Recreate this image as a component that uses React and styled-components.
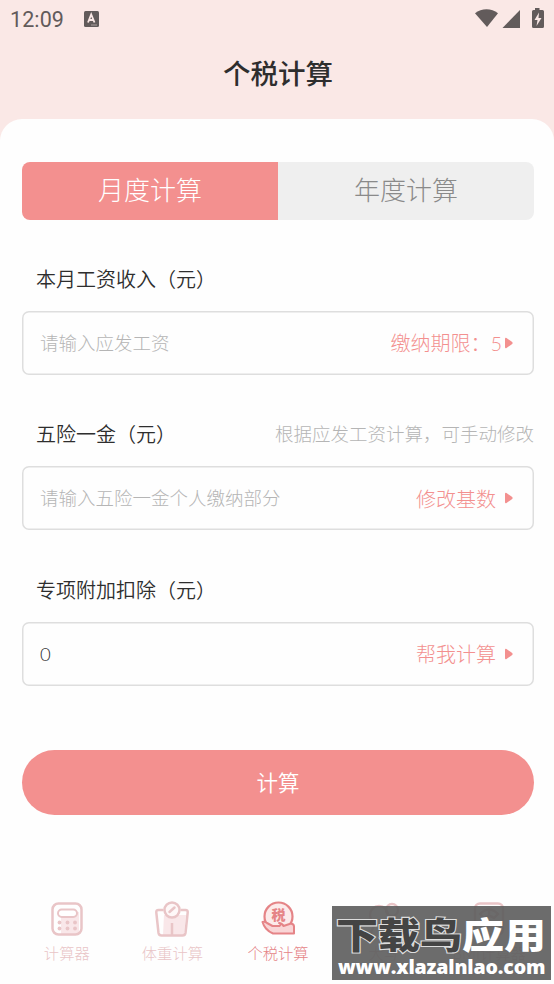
import React, { useState } from 'react'
import styled, { createGlobalStyle } from 'styled-components'

const Colors = {
    primary: '#f3908f',
    header: '#fae8e6',
    status: '#625b5b',
    text: '#2e2e2e',
    hint: '#b5b5b5',
    line: '#dedede',
    inactive: '#e9c5c7',
    active: '#e58487',
}

const GlobalStyle = createGlobalStyle`
    * {
        box-sizing: border-box;
    }

    body {
        margin: 0;
        background-color: ${Colors.header};
        font-family: Lato, 'Noto Sans CJK SC', sans-serif;
        font-weight: 300;
    }

    button,
    input {
        font: inherit;
        margin: 0;
        border: 0;
        padding: 0;
        background: none;
    }
`

const Screen = styled.div`
    position: relative;
    display: flex;
    flex-direction: column;
    height: 984px;
    width: 554px;
    overflow: hidden;
    white-space: nowrap;
`

const StatusBar = styled.div`
    display: flex;
    align-items: center;
    height: 38px;
    padding: 0 9px 0 10px;
    color: ${Colors.status};
`

const Clock = styled.span`
    width: 74px;
    font-family: Roboto, sans-serif;
    font-size: 21.5px;
    font-weight: 400;
    letter-spacing: 0.1px;
`

const StatusIcons = styled.svg`
    margin-left: auto;
`

const Title = styled.h1`
    height: 80.5px;
    margin: 0;
    color: ${Colors.text};
    font-size: 27.5px;
    font-weight: 500;
    line-height: 71px;
    text-align: center;
    padding-left: 2px;
`

const Sheet = styled.main`
    flex: 1;
    display: flex;
    flex-direction: column;
    padding: 43px 20px 0 22px;
    border-radius: 22px 22px 0 0;
    background-color: #fefefe;
`

const Tabs = styled.div`
    display: flex;
    height: 58.5px;
    margin-bottom: 42px;
    border-radius: 8px;
    overflow: hidden;
`

const Tab = styled.button`
    flex: 1;
    padding-bottom: 1px;
    color: ${props => (props.$active ? '#fff' : '#8a8a8a')};
    background-color: ${props => (props.$active ? Colors.primary : '#efefef')};
    font-size: 26px;
    line-height: 54px;
`

const Field = styled.section`
    height: 155.5px;
`

const FieldHead = styled.div`
    display: flex;
    align-items: center;
    justify-content: space-between;
    height: 32px;
    margin-bottom: 16.5px;
    padding-left: 14px;
`

const Label = styled.label`
    color: ${Colors.text};
    font-size: 20px;
    font-weight: 350;
`

const Hint = styled.span`
    padding-bottom: 2px;
    color: ${Colors.hint};
    font-size: 18.5px;
`

const InputBox = styled.div`
    display: flex;
    align-items: center;
    height: 64px;
    padding: 0 21px 0 18px;
    box-shadow: inset 0 0 0 1.5px ${Colors.line};
    border-radius: 7px;
`

const Input = styled.input`
    flex: 1;
    min-width: 0;
    color: ${Colors.text};
    font-size: 18.5px;
    outline: none;

    &::placeholder {
        color: ${Colors.hint};
        opacity: 1;
    }
`

const Action = styled.button`
    display: flex;
    align-items: center;
    gap: ${props => props.$gap}px;
    color: ${Colors.primary};
    font-size: 20px;
`

const Submit = styled.button`
    height: 65px;
    margin-top: 21px;
    padding-bottom: 2px;
    border-radius: 33px;
    color: #fff;
    background-color: ${Colors.primary};
    font-size: 21.5px;
    font-weight: 350;
`

const BottomNav = styled.nav`
    display: grid;
    grid-template-columns: repeat(5, 105.6px);
    margin: 85px -20px 0 -8px;
`

const NavItem = styled.div`
    display: flex;
    flex-direction: column;
    align-items: center;
    color: ${props => (props.$active ? Colors.active : Colors.inactive)};
    font-size: 15.3px;
    line-height: 24px;

    svg {
        display: block;
        margin-bottom: 3px;
    }
`

const Watermark = styled.div`
    position: absolute;
    left: 332px;
    top: 906px;
    width: 219px;
    height: 74px;
    background-color: rgba(92, 92, 92, 0.9);
`

const WatermarkName = styled.div`
    padding-left: 4px;
    color: #fff;
    font-size: 42px;
    font-weight: 900;
    line-height: 60px;
    height: 50px;
    transform: scaleY(0.86);
`

const Outlined = styled.span`
    color: #444;
    -webkit-text-stroke: 2.5px #ddd;
    paint-order: stroke fill;
`

const WatermarkSite = styled.div`
    padding-left: 6px;
    color: #fff;
    font-family: 'Open Sans', sans-serif;
    font-size: 19.5px;
    font-weight: 800;
    line-height: 22px;
    height: 24px;
    letter-spacing: -0.15px;
`

const KeyboardIcon = () => (
    <svg width="15" height="16" viewBox="0 0 15 16">
        <rect width="15" height="16" rx="1.5" fill="currentColor" />
        <path d="M4 11.5 7.2 3.5 10.5 11.5M5.2 9h4" fill="none" stroke={Colors.header} strokeWidth="1.8" />
        <path d="M7.5 14h1M9.5 14h1M11.5 14h1" stroke={Colors.header} />
    </svg>
)

const SystemIcons = () => (
    <StatusIcons width="70" height="22" viewBox="0 0 70 22" fill="currentColor">
        <path d="M0 5.2C6.5-.2 16.5-.2 23 5.2L12 19Z" />
        <path d="M45 2V20H27.5Z" />
        <path d="M60 2V0h4.5v2h3q1.5 0 1.5 1.5v15q0 1.5-1.5 1.5h-9q-1.5 0-1.5-1.5v-15Q57 2 58.5 2Z" />
        <path d="M64 4.5 59.5 12H62.5L61.5 18 66.5 10H63.5Z" fill={Colors.header} />
    </StatusIcons>
)

const Arrow = () => (
    <svg width="8" height="12" viewBox="0 0 8 12" fill="currentColor">
        <path d="M0 2Q0 .2 1.5.9L7.2 5.1Q8 6 7.2 6.9L1.5 11.1Q0 11.8 0 10Z" />
    </svg>
)

const CalculatorIcon = () => (
    <svg width="36" height="38" viewBox="0 0 36 38" fill="none" stroke="currentColor" strokeWidth="2.5">
        <path d="M12 17q0-5 5-5h13v22H12Z" fill="#f9e7e9" stroke="none" />
        <rect x="3.5" y="3.5" width="29" height="31" rx="6" />
        <rect x="9" y="9.5" width="19" height="7.5" rx="3.7" strokeWidth="2" fill="#fff" />
        <g fill="currentColor" stroke="none">
            <circle cx="10.5" cy="22.5" r="1.9" />
            <circle cx="18.5" cy="22.5" r="1.9" />
            <circle cx="26" cy="22.5" r="1.9" />
            <circle cx="10.5" cy="28.5" r="1.9" />
            <circle cx="18.5" cy="28.5" r="1.9" />
            <circle cx="26" cy="28.5" r="1.9" />
        </g>
    </svg>
)

const ScaleIcon = () => (
    <svg width="36" height="38" viewBox="0 0 36 38" fill="none" stroke="currentColor" strokeWidth="2.5">
        <path d="M10 15h22l-2 20H9Z" fill="#f9e7e9" stroke="none" />
        <path d="M9.5 10H4.5Q2 10 2.3 12.5L4.5 33Q5 35.5 7.5 35.5H28.5Q31 35.5 31.5 33L33.7 12.5Q34 10 31.5 10H26.5" />
        <circle cx="18" cy="10" r="7.5" fill="#fef8f8" />
        <path d="m15.5 12 5-4.5" strokeLinecap="round" />
        <path d="M18 23v12" />
    </svg>
)

const TaxIcon = () => (
    <svg width="36" height="38" viewBox="0 0 36 38" fill="none" stroke="currentColor">
        <circle cx="18.5" cy="16.5" r="14" fill="#fceaea" strokeWidth="2.2" />
        <path
            d="M2.5 22Q4.500 21 7 23L12.5 26H19.5Q22 24 19 23Q22 23 23.5 26L31 23.5Q34 24 34 26.5V33.5H13Q9 32 6 28.5Q3.5 25.5 2.5 22Z"
            fill="#f9d5d6"
            strokeWidth="2"
            strokeLinejoin="round"
        />
        <text x="18.5" y="20" textAnchor="middle" fontSize="14" fontWeight="900" fill="currentColor" stroke="none">
            税
        </text>
    </svg>
)

const PairIcon = () => (
    <svg width="36" height="38" viewBox="0 0 36 38" fill="none" stroke="currentColor" strokeWidth="2.3">
        <circle cx="13" cy="15" r="9" />
        <circle cx="26" cy="10" r="6" />
        <path d="M5 35q0-9 8-11 8 2 8 11M24 20q8 2 8 14" />
    </svg>
)

const BmiIcon = () => (
    <svg width="36" height="38" viewBox="0 0 36 38" fill="none" stroke="currentColor" strokeWidth="2.4">
        <rect x="4" y="3.5" width="28" height="31" rx="5" />
        <path d="M9 14q9-9 18 0l-4 4q-5-4-10 0ZM18 10v5M10 27h16" />
    </svg>
)

const fields = [
    { label: '本月工资收入（元）', placeholder: '请输入应发工资', action: '缴纳期限：5', gap: 3 },
    {
        label: '五险一金（元）',
        hint: '根据应发工资计算，可手动修改',
        placeholder: '请输入五险一金个人缴纳部分',
        action: '修改基数',
        gap: 9,
    },
    { label: '专项附加扣除（元）', value: '0', action: '帮我计算', gap: 9 },
]

const navItems = [
    { name: '计算器', Icon: CalculatorIcon },
    { name: '体重计算', Icon: ScaleIcon },
    { name: '个税计算', Icon: TaxIcon, active: true },
    { name: '大写', Icon: PairIcon },
    { name: 'BMI计算器', Icon: BmiIcon },
]

const App = () => {
    const [tab, setTab] = useState('月度计算')

    return (
        <>
            <GlobalStyle />
            <Screen>
                <StatusBar>
                    <Clock>12:09</Clock>
                    <KeyboardIcon />
                    <SystemIcons />
                </StatusBar>
                <Title>个税计算</Title>
                <Sheet>
                    <Tabs>
                        {['月度计算', '年度计算'].map(name => (
                            <Tab key={name} $active={tab === name} onClick={() => setTab(name)}>
                                {name}
                            </Tab>
                        ))}
                    </Tabs>
                    {fields.map((field, index) => (
                        <Field key={field.label}>
                            <FieldHead>
                                <Label htmlFor={`field-${index}`}>{field.label}</Label>
                                {field.hint && <Hint>{field.hint}</Hint>}
                            </FieldHead>
                            <InputBox>
                                <Input
                                    id={`field-${index}`}
                                    placeholder={field.placeholder}
                                    defaultValue={field.value}
                                />
                                <Action $gap={field.gap}>
                                    {field.action}
                                    <Arrow />
                                </Action>
                            </InputBox>
                        </Field>
                    ))}
                    <Submit>计算</Submit>
                    <BottomNav>
                        {navItems.map(({ name, Icon, active }) => (
                            <NavItem key={name} $active={active}>
                                <Icon />
                                {name}
                            </NavItem>
                        ))}
                    </BottomNav>
                </Sheet>
                <Watermark>
                    <WatermarkName>
                        <Outlined>下载鸟</Outlined>应用
                    </WatermarkName>
                    <WatermarkSite>www.xlazalnlao.com</WatermarkSite>
                </Watermark>
            </Screen>
        </>
    )
}

export default App
